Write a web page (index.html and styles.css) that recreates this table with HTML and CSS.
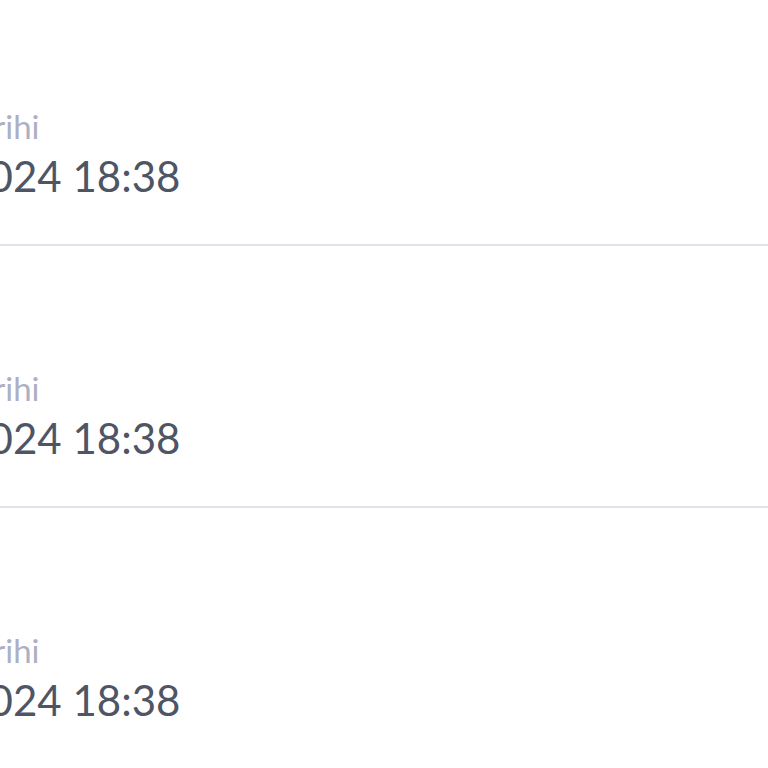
FILE: index.html
```html
<!DOCTYPE html>
<html lang="tr">
<head>
<meta charset="utf-8">
<link rel="stylesheet" href="styles.css">
</head>
<body>
<div class="list">
  <div class="row">
    <div class="info">
      <span class="label">Ödeme Tarihi</span>
      <span class="value">15.03.2024 18:38</span>
    </div>
  </div>
  <div class="row">
    <div class="info">
      <span class="label">Ödeme Tarihi</span>
      <span class="value">15.03.2024 18:38</span>
    </div>
  </div>
  <div class="row">
    <div class="info">
      <span class="label">Ödeme Tarihi</span>
      <span class="value">15.03.2024 18:38</span>
    </div>
  </div>
</div>
</body>
</html>
```
FILE: styles.css
```css
html, body {
  margin: 0;
  padding: 0;
  background: #ffffff;
  overflow: hidden;
}
body {
  font-family: Lato, "Noto Sans", sans-serif;
  width: 768px;
  height: 768px;
}
.list {
  margin-top: -16px;
}
.row {
  height: 260px;
  border-bottom: 2px solid #dfe4ea;
  display: flex;
  align-items: center;
}
.info {
  display: flex;
  flex-direction: column;
  margin-left: -153px;
  margin-top: 76px;
  white-space: nowrap;
}
.label {
  font-size: 33px;
  line-height: 47px;
  color: #adb0c4;
}
.value {
  font-size: 42px;
  line-height: 52px;
  color: #4e5565;
}
```
